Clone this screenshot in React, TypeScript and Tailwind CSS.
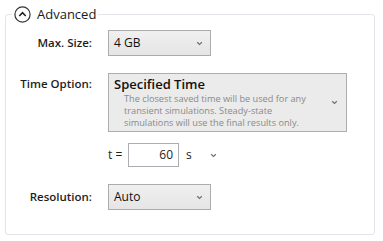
import React from 'react';

const font = { fontFamily: '"Open Sans", "Noto Sans", Arial, sans-serif' };

function Chevron({ className = '' }: { className?: string }) {
  return (
    <svg width="7" height="5" viewBox="0 0 7 5" className={className}>
      <path d="M1.2 1.2 L3.5 3.4 L5.8 1.2" fill="none" stroke="#6f6f6f" strokeWidth="1.2" />
    </svg>
  );
}

function Dropdown({ value }: { value: string }) {
  return (
    <div className="flex h-[26px] w-[103px] items-center justify-between border border-[#acacac] bg-gradient-to-b from-[#f0f0f0] to-[#e5e5e5] pl-[5px] pr-[7px]">
      <span className="text-[12px] text-[#111]">{value}</span>
      <Chevron />
    </div>
  );
}

export default function App() {
  return (
    <div className="h-[241px] w-[383px] bg-white" style={font}>
      <fieldset className="ml-[5px] mt-[4px] h-[231px] w-[370px] rounded-[3px] border border-[#e1e5ea]">
        <legend className="ml-[6px] flex h-[20px] items-center gap-[6px] px-[2px]">
          <svg width="17" height="17" viewBox="0 0 17 17">
            <circle cx="8.5" cy="8.5" r="7.6" fill="none" stroke="#333" strokeWidth="1.2" />
            <path d="M5.3 10 L8.5 6.6 L11.7 10" fill="none" stroke="#222" strokeWidth="1.6" />
          </svg>
          <span className="text-[13px] leading-[20px] text-[#1a1a1a]">Advanced</span>
        </legend>

        <div className="mt-[6px] grid grid-cols-[86px_1fr] gap-x-4 text-[#1e1e1e]">
          <div className="flex items-center justify-end text-[11.5px] font-semibold">Max. Size:</div>
          <Dropdown value="4 GB" />

          <div className="mt-[17px] pt-[2px] text-right text-[11.5px] font-semibold">Time Option:</div>
          <div className="mt-[17px] flex h-[59px] w-[239px] items-center justify-between border border-[#adadad] bg-[#ebebeb] pl-[5px] pr-[8px]">
            <div className="flex flex-col">
              <span className="text-[13px] font-semibold leading-[17px] text-[#111]">Specified Time</span>
              <span className="pl-[10px] text-[9.2px] leading-[12px] text-[#8a8a8a]">
                The closest saved time will be used for any
                <br />
                transient simulations. Steady-state
                <br />
                simulations will use the final results only.
              </span>
            </div>
            <Chevron />
          </div>

          <div />
          <div className="mt-[11px] flex h-[24px] items-center text-[12px]">
            <span className="w-[20px]">t =</span>
            <div className="flex h-[24px] w-[51px] items-center justify-end border border-[#abadb3] bg-white pr-[5px]">
              60
            </div>
            <span className="ml-[7px]">s</span>
            <Chevron className="ml-[18px]" />
          </div>

          <div className="mt-[17px] flex items-center justify-end text-[11.5px] font-semibold">Resolution:</div>
          <div className="mt-[17px]">
            <Dropdown value="Auto" />
          </div>
        </div>
      </fieldset>
    </div>
  );
}
